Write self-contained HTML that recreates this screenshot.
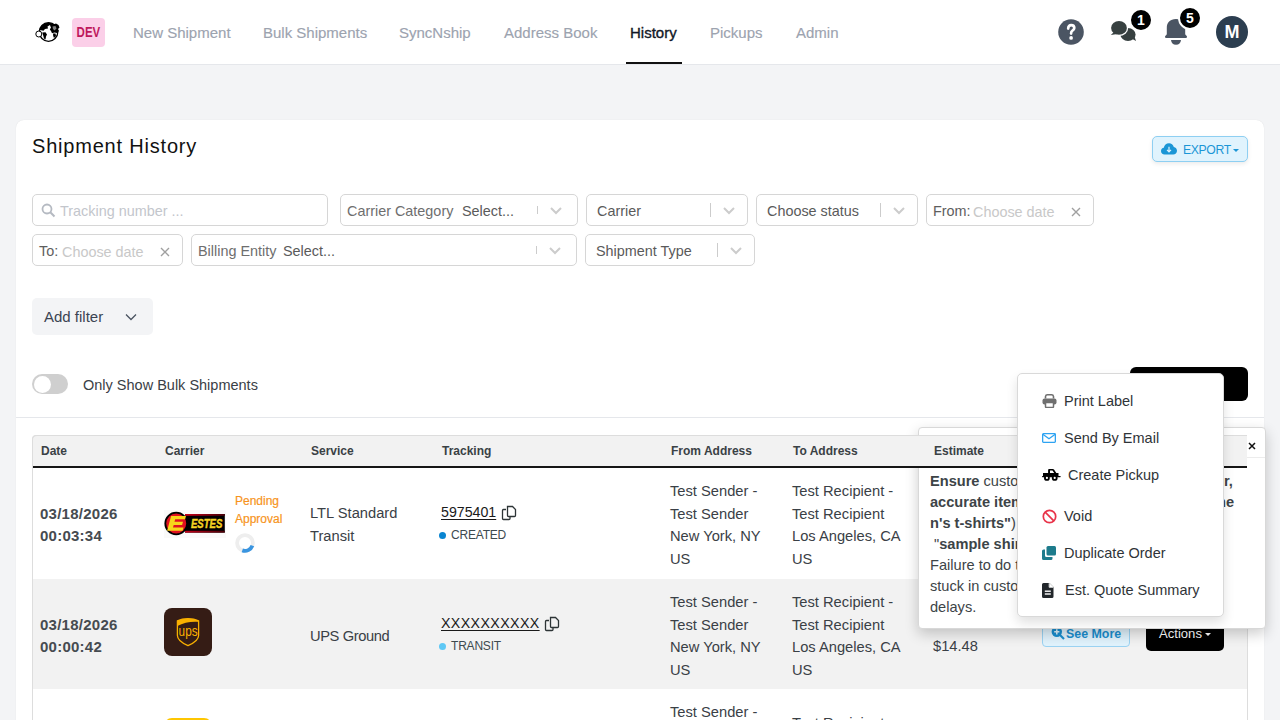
<!DOCTYPE html>
<html><head><meta charset="utf-8">
<style>
*{box-sizing:border-box;margin:0;padding:0}
html,body{width:1280px;height:720px;overflow:hidden;background:#f3f4f6;font-family:"Liberation Sans",sans-serif;color:#374151}
.abs{position:absolute}
#nav{position:absolute;left:0;top:0;width:1280px;height:65px;background:#fff;border-bottom:1px solid #e5e7eb}
.navi{position:absolute;top:24px;font-size:15px;color:#9ca3af;line-height:18px;white-space:nowrap;-webkit-text-stroke:0.15px #9ca3af}
#card{position:absolute;left:16px;top:120px;width:1248px;height:700px;background:#fff;border-radius:8px;box-shadow:0 0 1px rgba(0,0,0,0.12)}
.inp{position:absolute;height:32px;border:1px solid #d6d6d6;border-radius:5px;background:#fff;font-size:14.4px;white-space:nowrap}
.inp .t{position:absolute;top:7px;line-height:18px}
.sep{position:absolute;width:1px;background:#cccccc}
.chev{position:absolute;top:10px;width:12px;height:12px}
.th{position:absolute;top:444px;font-size:12px;font-weight:bold;color:#3a4145;line-height:14px;white-space:nowrap}
.cell{position:absolute;font-size:14.7px;line-height:22.5px;color:#3a4046;white-space:nowrap}
.dt{position:absolute;font-size:15px;font-weight:bold;letter-spacing:0.25px;line-height:22px;color:#464b50;white-space:nowrap}
.mi{position:absolute;font-size:14.5px;line-height:18px;color:#2f3438;white-space:nowrap}
.pb{position:absolute;left:930px;margin-top:1px;font-size:14.6px;line-height:21px;color:#3d4447;white-space:nowrap}
.pb b{font-weight:bold}
</style></head><body>
<div id="nav">
  <svg class="abs" style="left:35px;top:20px" width="27" height="24" viewBox="0 0 27 24">
    <circle cx="13.5" cy="12" r="9.3" fill="#fff" stroke="#000" stroke-width="1.3"/>
    <path d="M4.3 10.5 C5.5 5.5 9 2.8 13.5 2.7 C15.5 2.7 17 3.3 18.3 4.2 L16.5 6 L15 5 L12.5 6.5 L13 8.5 L10 9 L8.5 10.7 L6 10.2 Z" fill="#000"/>
    <path d="M15 5.5 L17 3.8 L19.5 4 L21 3.5 L23.5 5 L24.5 7.5 L23 9 L24 11 L22 13 L19.5 12.5 L17 13.2 L16 11 L14.8 9.5 L16 7.5 Z" fill="#000"/>
    <path d="M17.5 6.5 L20.5 6 L21.5 8.5 L19.5 10.5 L18 9 Z" fill="#fff" opacity="0.5"/>
    <path d="M7.2 12.5 L10.5 12.3 L12 14.5 L11 16.5 L10.5 19.5 L9 18.5 L8.2 15.5 Z" fill="#000"/>
    <path d="M18 13.5 L20.5 13.5 L21 16 L19 18 L18.2 16 Z" fill="#000"/>
    <ellipse cx="3.8" cy="14" rx="3" ry="3" fill="#fff" stroke="#000" stroke-width="1"/>
  </svg>
  <div class="abs" style="left:72px;top:18px;width:33px;height:29px;background:#fbcfe8;border-radius:4px;color:#be185d;font-weight:bold;font-size:14px;line-height:29px;text-align:center;"><span style="display:inline-block;transform:scaleX(0.82)">DEV</span></div>
  <div class="navi" style="left:133px">New Shipment</div>
  <div class="navi" style="left:263px">Bulk Shipments</div>
  <div class="navi" style="left:399px">SyncNship</div>
  <div class="navi" style="left:504px">Address Book</div>
  <div class="navi" style="left:630px;color:#111827;-webkit-text-stroke:0.35px #111827">History</div>
  <div class="abs" style="left:626px;top:62px;width:56px;height:2px;background:#111"></div>
  <div class="navi" style="left:710px">Pickups</div>
  <div class="navi" style="left:796px">Admin</div>
  <!-- help -->
  <svg class="abs" style="left:1058px;top:19px" width="26" height="26" viewBox="0 0 26 26"><circle cx="13" cy="13" r="12.8" fill="#4b5563"/><path d="M10.2 9.6 C10.2 7.3 11.5 6.1 13.2 6.1 C15 6.1 16.3 7.3 16.3 9 C16.3 10.6 15.2 11.3 14.2 11.9 C13.4 12.4 13.1 13 13.1 14.6" stroke="#fff" stroke-width="2.7" fill="none" stroke-linecap="round" stroke-linejoin="round"/><circle cx="13.1" cy="18.9" r="1.85" fill="#fff"/></svg>
  <!-- chat -->
  <svg class="abs" style="left:1110px;top:20px" width="28" height="22" viewBox="0 0 28 22">
    <ellipse cx="18" cy="14.5" rx="7.6" ry="6.5" fill="#374040"/>
    <path d="M26 21 L21.5 18.5 L24.5 16.5 Z" fill="#374040"/>
    <ellipse cx="9" cy="7.9" rx="9.2" ry="8.1" fill="#fff"/>
    <ellipse cx="9" cy="7.9" rx="7.9" ry="6.8" fill="#374040"/>
    <path d="M0.8 15 L4.5 11.5 L7.5 14 Z" fill="#374040"/>
  </svg>
  <div class="abs" style="left:1129px;top:8px;width:24px;height:24px;border-radius:12px;background:#000;border:2px solid #fff;color:#fff;font-weight:bold;font-size:14px;line-height:20px;text-align:center">1</div>
  <!-- bell -->
  <svg class="abs" style="left:1164px;top:18px" width="24" height="28" viewBox="0 0 24 28">
    <path d="M12 1 C6 1 2.8 4.5 2.8 10 L2.8 15.8 Q2.8 17 1.8 17.6 Q1 18.1 1 19 Q1 20.1 2.2 20.1 L21.8 20.1 Q23 20.1 23 19 Q23 18.1 22.2 17.6 Q21.2 17 21.2 15.8 L21.2 10 C21.2 4.5 18 1 12 1 Z" fill="#4b5563"/>
    <path d="M7 22 L17 22 Q16.5 26.7 12 26.7 Q7.5 26.7 7 22 Z" fill="#4b5563"/>
  </svg>
  <div class="abs" style="left:1178px;top:6px;width:24px;height:24px;border-radius:12px;background:#000;border:2px solid #fff;color:#fff;font-weight:bold;font-size:14px;line-height:20px;text-align:center">5</div>
  <div class="abs" style="left:1216px;top:16px;width:32px;height:32px;border-radius:16px;background:#2c3e50;color:#fff;font-weight:bold;font-size:18px;line-height:32px;text-align:center">M</div>
</div>
<div id="card"></div>
<div class="abs" style="left:32px;top:133px;font-size:20px;letter-spacing:0.8px;line-height:26px;color:#111">Shipment History</div>

<!-- export -->
<div class="abs" style="left:1152px;top:136px;width:96px;height:26px;background:#e0f3fd;border:1px solid #8ecff2;border-radius:5px;box-shadow:0 2px 4px rgba(0,0,0,0.08)">
  <svg class="abs" style="left:8px;top:6px" width="16" height="12" viewBox="0 0 16 12">
    <path d="M3.5 11.5 C1.5 11.5 0 10 0 8 C0 6.3 1.2 5 2.8 4.8 C3.2 2.2 5.3 0.3 8 0.3 C10.3 0.3 12.2 1.8 12.8 3.9 C14.7 4.2 16 5.8 16 7.7 C16 9.8 14.3 11.5 12.2 11.5 Z" fill="#1b96d6"/>
    <path d="M8 3.8 L8 8.8 M6 6.8 L8 8.8 L10 6.8" stroke="#e0f3fd" stroke-width="1.2" fill="none"/>
  </svg>
  <span class="abs" style="left:30px;top:6px;font-size:12.2px;line-height:14px;color:#1b96d6;letter-spacing:-0.35px">EXPORT</span>
  <svg class="abs" style="left:80px;top:12px" width="6" height="3" viewBox="0 0 6 3"><path d="M0 0 L6 0 L3 3 Z" fill="#1b96d6"/></svg>
</div>

<!-- filters row 1 -->
<div class="inp" style="left:32px;top:194px;width:296px">
  <svg class="abs" style="left:8px;top:8px" width="15" height="15" viewBox="0 0 15 15"><circle cx="6" cy="6" r="4.5" stroke="#b5bac2" stroke-width="1.8" fill="none"/><path d="M9.3 9.3 L13.5 13.5" stroke="#b5bac2" stroke-width="2"/></svg>
  <span class="t" style="left:27px;color:#c3c6cc">Tracking number ...</span></div>
<div class="inp" style="left:340px;top:194px;width:238px"><span class="t" style="left:6px;color:#6e6e6e">Carrier Category</span><span class="t" style="left:121px;color:#5a5a5a">Select...</span><div class="sep" style="left:196px;top:11px;height:8px"></div><svg class="abs" style="left:209px;top:12px" width="12" height="8" viewBox="0 0 12 8"><path d="M1 1 L6 6 L11 1" stroke="#cccccc" stroke-width="2" fill="none"/></svg></div>
<div class="inp" style="left:586px;top:194px;width:162px"><span class="t" style="left:10px;color:#5a5a5a">Carrier</span><div class="sep" style="left:123px;top:8px;height:14px"></div><svg class="abs" style="left:136px;top:12px" width="12" height="8" viewBox="0 0 12 8"><path d="M1 1 L6 6 L11 1" stroke="#cccccc" stroke-width="2" fill="none"/></svg></div>
<div class="inp" style="left:756px;top:194px;width:162px"><span class="t" style="left:10px;color:#5a5a5a">Choose status</span><div class="sep" style="left:123px;top:8px;height:14px"></div><svg class="abs" style="left:136px;top:12px" width="12" height="8" viewBox="0 0 12 8"><path d="M1 1 L6 6 L11 1" stroke="#cccccc" stroke-width="2" fill="none"/></svg></div>
<div class="inp" style="left:926px;top:194px;width:168px"><span class="t" style="left:6px;color:#5e5e5e">From:</span><span class="t" style="left:46px;top:8px;color:#c8c8c8">Choose date</span><svg class="abs" style="left:144px;top:12px" width="10" height="10" viewBox="0 0 10 10"><path d="M1 1 L9 9 M9 1 L1 9" stroke="#a0a0a0" stroke-width="1.4"/></svg></div>
<!-- row 2 -->
<div class="inp" style="left:32px;top:234px;width:151px"><span class="t" style="left:6px;color:#5e5e5e">To:</span><span class="t" style="left:29px;top:8px;color:#c8c8c8">Choose date</span><svg class="abs" style="left:127px;top:12px" width="10" height="10" viewBox="0 0 10 10"><path d="M1 1 L9 9 M9 1 L1 9" stroke="#a0a0a0" stroke-width="1.4"/></svg></div>
<div class="inp" style="left:191px;top:234px;width:386px"><span class="t" style="left:6px;color:#6e6e6e">Billing Entity</span><span class="t" style="left:91px;color:#5a5a5a">Select...</span><div class="sep" style="left:344px;top:11px;height:8px"></div><svg class="abs" style="left:357px;top:12px" width="12" height="8" viewBox="0 0 12 8"><path d="M1 1 L6 6 L11 1" stroke="#cccccc" stroke-width="2" fill="none"/></svg></div>
<div class="inp" style="left:585px;top:234px;width:170px"><span class="t" style="left:10px;color:#5a5a5a">Shipment Type</span><div class="sep" style="left:131px;top:8px;height:14px"></div><svg class="abs" style="left:144px;top:12px" width="12" height="8" viewBox="0 0 12 8"><path d="M1 1 L6 6 L11 1" stroke="#cccccc" stroke-width="2" fill="none"/></svg></div>

<div class="abs" style="left:32px;top:298px;width:121px;height:37px;background:#f3f4f6;border-radius:5px;font-size:15px;color:#3b4452">
  <span class="abs" style="left:12px;top:10px;line-height:17px">Add filter</span>
  <svg class="abs" style="left:93px;top:15px" width="12" height="8" viewBox="0 0 12 8"><path d="M1 1.5 L6 6.5 L11 1.5" stroke="#4a5361" stroke-width="1.3" fill="none"/></svg>
</div>

<div class="abs" style="left:32px;top:374px;width:36px;height:20px;border-radius:10px;background:#cfcfcf"><div class="abs" style="left:1.5px;top:1.5px;width:17px;height:17px;border-radius:9px;background:#fff"></div></div>
<div class="abs" style="left:83px;top:376px;font-size:14.5px;line-height:18px;color:#3a4046">Only Show Bulk Shipments</div>
<div class="abs" style="left:1130px;top:367px;width:118px;height:34px;background:#000;border-radius:6px"></div>
<div class="abs" style="left:16px;top:417px;width:1248px;height:1px;background:#e5e7eb"></div>

<!-- table frame -->
<div class="abs" style="left:32px;top:435px;width:1216px;height:300px;border-left:1px solid #ddd;border-right:1px solid #ddd;border-top:1px solid #ddd;border-radius:4px 4px 0 0"></div>
<div class="abs" style="left:33px;top:579px;width:1214px;height:110px;background:#f2f2f2"></div>

<!-- row 1 -->
<div class="dt" style="left:40px;top:503px">03/18/2026<br>00:03:34</div>
<svg class="abs" style="left:163px;top:509px" width="64" height="30" viewBox="0 0 64 30">
  <defs><linearGradient id="rg" x1="0" x2="1" y1="0" y2="0"><stop offset="0" stop-color="#c8001a"/><stop offset="1" stop-color="#4a0008"/></linearGradient></defs>
  <rect x="1" y="1" width="62" height="28" fill="#fafafa"/>
  <rect x="22" y="5" width="39.8" height="18.6" fill="#000"/>
  <rect x="22" y="5" width="39.8" height="1.8" fill="url(#rg)"/>
  <rect x="22" y="21.8" width="39.8" height="1.8" fill="url(#rg)"/>
  <circle cx="13.2" cy="14.5" r="10.9" fill="#e0101f" stroke="#000" stroke-width="1.8"/>
  <path d="M8.1 6.9 L23 6.9 L22.1 10.2 L12.2 10.2 L11.5 12.7 L20 12.7 L19.1 15.9 L10.7 15.9 L10 18.4 L20.5 18.4 L19.6 21.7 L4.1 21.7 Z" fill="#f7d51b"/>
  <text x="28" y="19" font-family="Liberation Sans" font-weight="bold" font-style="italic" font-size="12" fill="#f5d322" stroke="#f5d322" stroke-width="0.45" textLength="31.3" lengthAdjust="spacingAndGlyphs">ESTES</text>
</svg>
<div class="abs" style="left:235px;top:492px;font-size:12px;line-height:18px;color:#f7941d;white-space:nowrap;-webkit-text-stroke:0.2px #f7941d">Pending<br>Approval</div>
<svg class="abs" style="left:235px;top:533px" width="20" height="20" viewBox="0 0 20 20">
  <circle cx="10" cy="10" r="7.9" stroke="#eeeeee" stroke-width="3.8" fill="none"/>
  <path d="M17.4 12.7 A7.9 7.9 0 0 1 7.3 17.4" stroke="#3a95e0" stroke-width="3.8" fill="none"/>
</svg>
<div class="cell" style="left:310px;top:502px">LTL Standard<br>Transit</div>
<div class="abs" style="left:441px;top:504px;font-size:14.2px;line-height:17px;color:#1a1a1a;text-decoration:underline;text-underline-offset:2px">5975401</div>
<svg class="abs" style="left:501px;top:505px" width="16" height="16" viewBox="0 0 16 16"><path d="M5 4.5 H2.5 A1 1 0 0 0 1.5 5.5 V13.5 A1 1 0 0 0 2.5 14.5 H8 A1 1 0 0 0 9 13.5 V12" stroke="#2d3436" stroke-width="1.3" fill="none"/><path d="M6.5 1.5 H11.5 L14.5 4.5 V10.5 A1 1 0 0 1 13.5 11.5 H7.5 A1 1 0 0 1 6.5 10.5 Z" stroke="#2d3436" stroke-width="1.3" fill="none"/></svg>
<div class="abs" style="left:439px;top:532px;width:7px;height:7px;border-radius:4px;background:#0a85d1"></div>
<div class="abs" style="left:451px;top:528px;font-size:12px;letter-spacing:-0.2px;line-height:14px;color:#3d4a4f">CREATED</div>
<div class="cell" style="left:670px;top:480px">Test Sender -<br>Test Sender<br>New York, NY<br>US</div>
<div class="cell" style="left:792px;top:480px">Test Recipient -<br>Test Recipient<br>Los Angeles, CA<br>US</div>

<!-- row 2 -->
<div class="dt" style="left:40px;top:614px">03/18/2026<br>00:00:42</div>
<svg class="abs" style="left:164px;top:608px" width="48" height="48" viewBox="0 0 48 48">
  <rect x="0" y="0" width="48" height="48" rx="8" fill="#351c15"/>
  <path d="M13.4 12.8 C19.5 9.8 28.5 9.8 34.6 12.8 L34.6 27.5 C34.6 32 30.5 34.8 24 37.6 C17.5 34.8 13.4 32 13.4 27.5 Z" fill="none" stroke="#f9b000" stroke-width="1.3"/>
  <path d="M13.4 12.8 C19.5 9.8 28.5 9.8 34.6 12.8 L34.6 13.8 C27 13.2 19.5 14.5 13.4 18 Z" fill="#f9b000"/>
  <text x="14.6" y="27.8" font-family="Liberation Sans" font-size="15" fill="#f9b000" textLength="19" lengthAdjust="spacingAndGlyphs">ups</text>
</svg>
<div class="cell" style="left:310px;top:625px;letter-spacing:-0.4px">UPS Ground</div>
<div class="abs" style="left:441px;top:615px;font-size:14.2px;line-height:17px;color:#1a1a1a;text-decoration:underline;text-underline-offset:2px;letter-spacing:0.4px">XXXXXXXXXX</div>
<svg class="abs" style="left:544px;top:616px" width="16" height="16" viewBox="0 0 16 16"><path d="M5 4.5 H2.5 A1 1 0 0 0 1.5 5.5 V13.5 A1 1 0 0 0 2.5 14.5 H8 A1 1 0 0 0 9 13.5 V12" stroke="#2d3436" stroke-width="1.3" fill="none"/><path d="M6.5 1.5 H11.5 L14.5 4.5 V10.5 A1 1 0 0 1 13.5 11.5 H7.5 A1 1 0 0 1 6.5 10.5 Z" stroke="#2d3436" stroke-width="1.3" fill="none"/></svg>
<div class="abs" style="left:439px;top:643px;width:7px;height:7px;border-radius:4px;background:#5ec8f5"></div>
<div class="abs" style="left:451px;top:639px;font-size:12px;letter-spacing:-0.2px;line-height:14px;color:#3d4a4f">TRANSIT</div>
<div class="cell" style="left:670px;top:591px">Test Sender -<br>Test Sender<br>New York, NY<br>US</div>
<div class="cell" style="left:792px;top:591px">Test Recipient -<br>Test Recipient<br>Los Angeles, CA<br>US</div>
<div class="cell" style="left:933px;top:612px;color:#3a4046">$14.48<br>$14.48</div>
<div class="abs" style="left:1042px;top:621px;width:88px;height:26px;background:#e1f3fd;border:1px solid #9bd3f3;border-radius:4px">
  <svg class="abs" style="left:8px;top:4px" width="14" height="14" viewBox="0 0 14 14"><circle cx="5.8" cy="5.8" r="5.2" fill="#1a8fd0"/><path d="M9 9 L13 13" stroke="#1a8fd0" stroke-width="2.2"/><path d="M5.8 3.2 V8.4 M3.2 5.8 H8.4" stroke="#e1f3fd" stroke-width="1.5"/></svg>
  <span class="abs" style="left:23px;top:5px;font-size:12.4px;font-weight:bold;line-height:15px;color:#1a8fd0">See More</span>
</div>
<div class="abs" style="left:1146px;top:616px;width:78px;height:35px;background:#000;border-radius:5px">
  <span class="abs" style="left:13px;top:9px;font-size:13.1px;line-height:17px;color:#fff">Actions</span>
  <svg class="abs" style="left:59px;top:17px" width="6" height="3" viewBox="0 0 6 3"><path d="M0 0 L6 0 L3 3 Z" fill="#fff"/></svg>
</div>

<!-- row 3 -->
<svg class="abs" style="left:164px;top:718px" width="48" height="10" viewBox="0 0 48 10"><rect x="0" y="0" width="48" height="20" rx="8" fill="#fec601"/></svg>
<div class="cell" style="left:670px;top:701px">Test Sender -</div>
<div class="cell" style="left:792px;top:712px">Test Recipient -</div>

<!-- popover -->
<div class="abs" style="left:918px;top:427px;width:348px;height:202px;background:#fff;border:1px solid #d8d8d8;border-radius:4px;box-shadow:0 5px 14px rgba(0,0,0,0.2)">
  <div class="abs" style="left:0;top:29px;width:346px;height:1px;background:#ececec"></div>
  <svg class="abs" style="left:329px;top:14px" width="8" height="8" viewBox="0 0 8 8"><path d="M1 1 L7 7 M7 1 L1 7" stroke="#111" stroke-width="1.5"/></svg>
</div>
<div class="pb" style="top:470px"><b>Ensure</b> customs descriptions are clea<b>r,</b></div>
<div class="pb" style="top:491px"><b>accurate item descriptions (e.g. "wome</b></div>
<div class="pb" style="top:512px"><b>n's t-shirts"</b>) instead of vague</div>
<div class="pb" style="top:533px">&nbsp;"<b>sample shirts</b>".</div>
<div class="pb" style="top:554px">Failure to do this may get your</div>
<div class="pb" style="top:575px">stuck in customs and cause</div>
<div class="pb" style="top:596px">delays.</div>
<div class="pb" style="top:470px;left:1224px"><b>r,</b></div>
<div class="pb" style="top:491px;left:1213px"><b>me</b></div>

<!-- table header (above popover) -->
<div class="abs" style="left:32px;top:435px;width:1215px;height:33px;border:1px solid #ddd;border-bottom:none;border-right:none;border-radius:5px 0 0 0;background:#f2f2f2"></div>
<div class="abs" style="left:33px;top:466px;width:1214px;height:2px;background:#161616"></div>
<div class="th" style="left:41px">Date</div>
<div class="th" style="left:165px">Carrier</div>
<div class="th" style="left:311px">Service</div>
<div class="th" style="left:442px">Tracking</div>
<div class="th" style="left:671px">From Address</div>
<div class="th" style="left:793px">To Address</div>
<div class="th" style="left:934px">Estimate</div>

<!-- dropdown -->
<div class="abs" style="left:1017px;top:373px;width:207px;height:244px;background:#fff;border:1px solid #d9d9d9;border-radius:5px;box-shadow:0 6px 12px rgba(0,0,0,0.12)"></div>
<svg class="abs" style="left:1042px;top:394px" width="15" height="14" viewBox="0 0 15 14"><path d="M3.5 4.5 V2.5 A2 2 0 0 1 5.5 0.8 H9.5 A2 2 0 0 1 11.5 2.5 V4.5" stroke="#6f6f6f" stroke-width="1.6" fill="none"/><rect x="0.5" y="4.5" width="14" height="6" rx="2" fill="#6f6f6f"/><rect x="3.5" y="8.5" width="8" height="5" rx="1" fill="#fff" stroke="#6f6f6f" stroke-width="1.5"/></svg>
<div class="mi" style="left:1064px;top:392px">Print Label</div>
<svg class="abs" style="left:1042px;top:433px" width="14" height="10" viewBox="0 0 14 10"><rect x="0.65" y="0.65" width="12.7" height="8.7" rx="0.8" stroke="#2ea3f2" stroke-width="1.3" fill="none"/><path d="M0.8 1.2 L7 5.8 L13.2 1.2" stroke="#2ea3f2" stroke-width="1.3" fill="none"/></svg>
<div class="mi" style="left:1064px;top:429px">Send By Email</div>
<svg class="abs" style="left:1041px;top:468px" width="20" height="14" viewBox="0 0 20 14"><path d="M7.1 5.2 L7.1 2 Q7.1 0.9 8.2 0.9 L11.8 0.9 Q12.5 0.9 13 1.6 L15.5 5.2 Z M9 2.5 L9 5 L13.2 5 L11.5 2.5 Z" fill="#000" fill-rule="evenodd"/><rect x="2" y="5" width="15.5" height="3.6" fill="#000"/><rect x="1" y="7.9" width="18.7" height="1.3" rx="0.6" fill="#000"/><circle cx="5.9" cy="9.9" r="2.9" fill="#000"/><circle cx="5.9" cy="9.9" r="1.1" fill="#fff"/><circle cx="13.7" cy="9.9" r="2.9" fill="#000"/><circle cx="13.7" cy="9.9" r="1.1" fill="#fff"/></svg>
<div class="mi" style="left:1068px;top:466px">Create Pickup</div>
<svg class="abs" style="left:1042px;top:509px" width="15" height="15" viewBox="0 0 15 15"><circle cx="7.5" cy="7.5" r="6.2" stroke="#e8344a" stroke-width="1.7" fill="none"/><path d="M3.2 3.2 L11.8 11.8" stroke="#e8344a" stroke-width="1.7"/></svg>
<div class="mi" style="left:1064px;top:507px">Void</div>
<svg class="abs" style="left:1042px;top:546px" width="14" height="14" viewBox="0 0 14 14"><rect x="4.5" y="0" width="9.5" height="9.5" rx="1.5" fill="#1d7b8c"/><path d="M3 3.5 L3 9.5 A1.5 1.5 0 0 0 4.5 11 L10.5 11 L10.5 12.5 A1.5 1.5 0 0 1 9 14 L1.5 14 A1.5 1.5 0 0 1 0 12.5 L0 5 A1.5 1.5 0 0 1 1.5 3.5 Z" fill="#1d7b8c"/></svg>
<div class="mi" style="left:1064px;top:544px">Duplicate Order</div>
<svg class="abs" style="left:1042px;top:583px" width="12" height="15" viewBox="0 0 12 15"><path d="M1.5 0 H7.5 L11.5 4 V13.5 A1.5 1.5 0 0 1 10 15 H1.5 A1.5 1.5 0 0 1 0 13.5 V1.5 A1.5 1.5 0 0 1 1.5 0 Z" fill="#22272b"/><path d="M7.5 0 V4 H11.5" fill="#fff"/><path d="M7.2 0.2 V4.3 H11.3" stroke="#fff" stroke-width="0.9" fill="none"/><rect x="2.8" y="7.5" width="6" height="1.4" fill="#fff"/><rect x="2.8" y="10.3" width="6" height="1.4" fill="#fff"/></svg>
<div class="mi" style="left:1065px;top:581px">Est. Quote Summary</div>

</body></html>
